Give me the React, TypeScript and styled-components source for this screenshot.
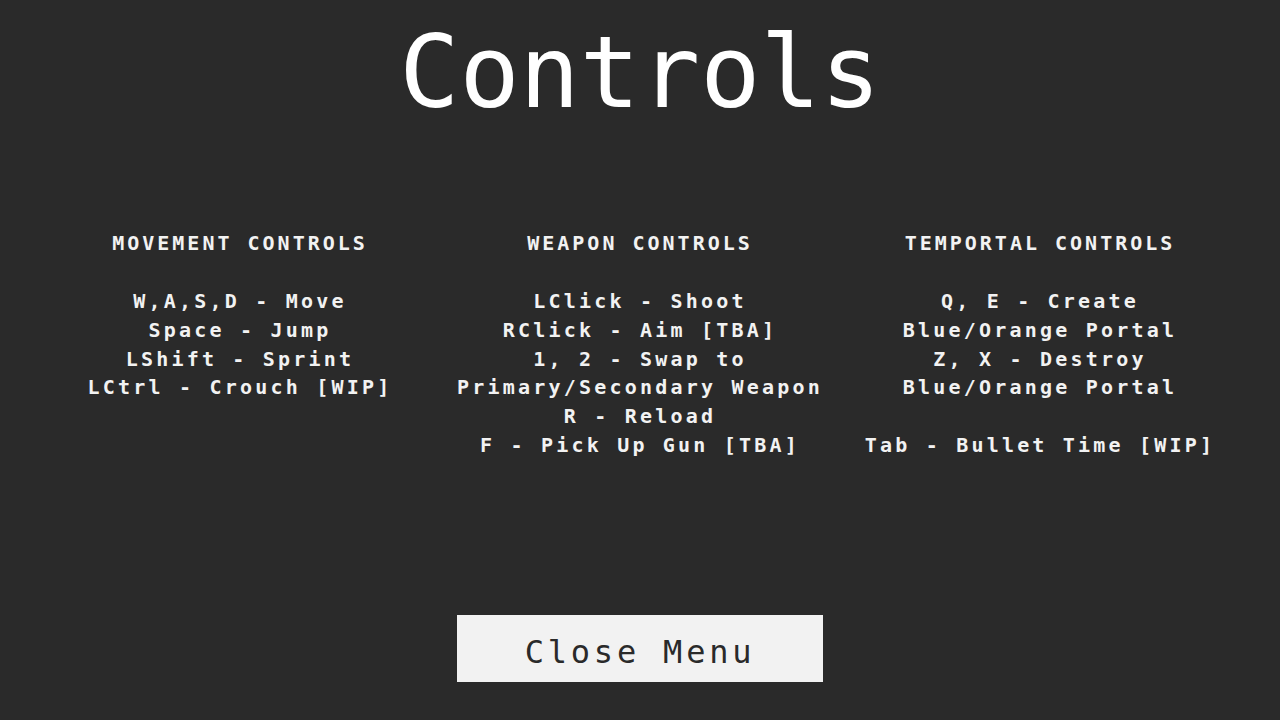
import { createGlobalStyle, styled } from 'styled-components'

const GlobalStyle = createGlobalStyle`
  html, body {
    margin: 0;
    padding: 0;
    background: #2a2a2a;
  }
  body {
    font-family: 'DejaVu Sans Mono', 'Liberation Mono', monospace;
    color: #f2f2f2;
  }
`

type Section = {
  title: string
  lines: string[]
}

const sections: Section[] = [
  {
    title: 'MOVEMENT CONTROLS',
    lines: ['W,A,S,D - Move', 'Space - Jump', 'LShift - Sprint', 'LCtrl - Crouch [WIP]'],
  },
  {
    title: 'WEAPON CONTROLS',
    lines: [
      'LClick - Shoot',
      'RClick - Aim [TBA]',
      '1, 2 - Swap to',
      'Primary/Secondary Weapon',
      'R - Reload',
      'F - Pick Up Gun [TBA]',
    ],
  },
  {
    title: 'TEMPORTAL CONTROLS',
    lines: [
      'Q, E - Create',
      'Blue/Orange Portal',
      'Z, X - Destroy',
      'Blue/Orange Portal',
      '',
      'Tab - Bullet Time [WIP]',
    ],
  },
]

function App() {
  return (
    <>
      <GlobalStyle />
      <StScreen>
        <StTitle>Controls</StTitle>
        <StColumns>
          {sections.map((section) => (
            <StColumn key={section.title}>
              <StHeading>{section.title}</StHeading>
              {section.lines.map((line, index) => (
                <StLine key={`${section.title}${index}`}>{line === '' ? '\u00a0' : line}</StLine>
              ))}
            </StColumn>
          ))}
        </StColumns>
        <StButton type="button">Close Menu</StButton>
      </StScreen>
    </>
  )
}

export default App

// #region styles

const StScreen = styled.div`
  width: 1280px;
  height: 720px;
  display: flex;
  flex-direction: column;
  align-items: center;
  background: #2a2a2a;
  overflow: hidden;
`

const StTitle = styled.h1`
  margin: 15px 0 0;
  font-size: 100px;
  line-height: 116px;
  font-weight: 400;
  letter-spacing: 0;
  color: #ffffff;
`

const StColumns = styled.div`
  width: 1200px;
  margin-top: 98px;
  display: grid;
  grid-template-columns: repeat(3, 1fr);
  flex-grow: 1;
`

const StColumn = styled.div`
  display: flex;
  flex-direction: column;
  align-items: center;
  text-align: center;
`

const StHeading = styled.div`
  font-size: 20px;
  font-weight: 700;
  line-height: 29px;
  letter-spacing: 3px;
  margin-bottom: 29px;
  white-space: nowrap;
`

const StLine = styled.div`
  font-size: 20px;
  font-weight: 700;
  line-height: 28.8px;
  letter-spacing: 3.2px;
  white-space: nowrap;
`

const StButton = styled.button`
  width: 366px;
  height: 67px;
  margin-bottom: 38px;
  border: none;
  background: #f2f2f2;
  color: #2a2a2a;
  font-family: 'DejaVu Sans Mono', 'Liberation Mono', monospace;
  font-size: 32px;
  line-height: 67px;
  padding: 4px 0 0;
  letter-spacing: 3.8px;
  cursor: pointer;
`

// #endregion styles
